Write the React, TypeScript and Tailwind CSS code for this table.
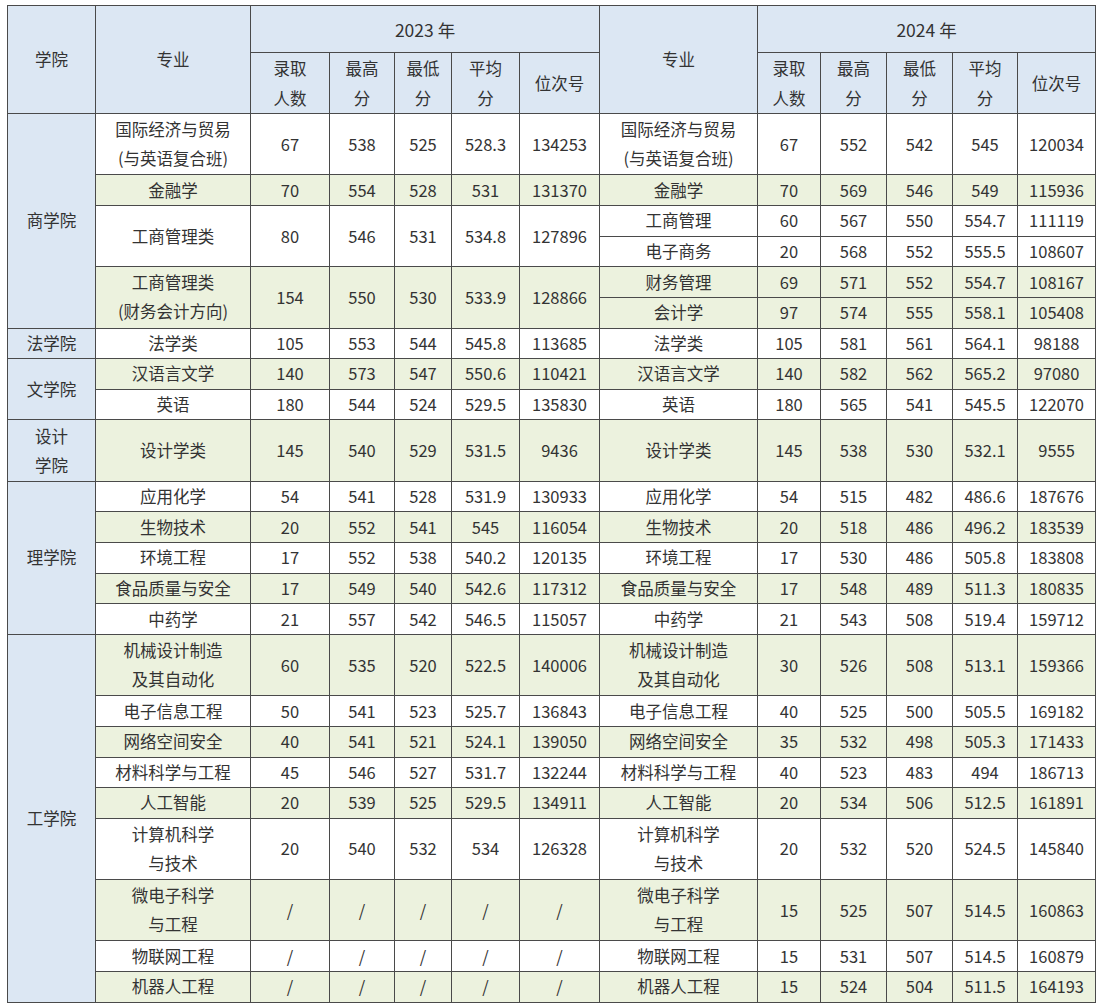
import React from "react";

type Vals = (string | number)[];

const G = "bg-[#ecf2de]";
const W = "bg-white";
const B = "bg-[#dce7f3]";

const td = "border border-[#4a4a4a] p-0 text-center align-middle";

function Cells({ v, bg, rs }: { v: Vals; bg: string; rs?: number }) {
  return (
    <>
      {v.map((x, i) => (
        <td key={i} rowSpan={rs} className={`${td} ${bg}`}>
          {x}
        </td>
      ))}
    </>
  );
}

function Major({ lines, bg, rs }: { lines: string[]; bg: string; rs?: number }) {
  return (
    <td rowSpan={rs} className={`${td} ${bg}`}>
      {lines.map((l, i) => (
        <div key={i}>{l}</div>
      ))}
    </td>
  );
}

const H1 = "h-[30.65px]";
const H2 = "h-[61.3px]";

type Row = {
  college?: { lines: string[]; rs: number };
  left?: { lines: string[]; v: Vals; bg: string; rs?: number };
  right: { lines: string[]; v: Vals; bg: string };
  h: string;
};

const S = ["/", "/", "/", "/", "/"];

const rows: Row[] = [
  {
    college: { lines: ["商学院"], rs: 6 },
    left: { lines: ["国际经济与贸易", "(与英语复合班)"], v: [67, 538, 525, 528.3, 134253], bg: W },
    right: { lines: ["国际经济与贸易", "(与英语复合班)"], v: [67, 552, 542, 545, 120034], bg: W },
    h: H2,
  },
  {
    left: { lines: ["金融学"], v: [70, 554, 528, 531, 131370], bg: G },
    right: { lines: ["金融学"], v: [70, 569, 546, 549, 115936], bg: G },
    h: H1,
  },
  {
    left: { lines: ["工商管理类"], v: [80, 546, 531, 534.8, 127896], bg: W, rs: 2 },
    right: { lines: ["工商管理"], v: [60, 567, 550, 554.7, 111119], bg: W },
    h: H1,
  },
  {
    right: { lines: ["电子商务"], v: [20, 568, 552, 555.5, 108607], bg: W },
    h: H1,
  },
  {
    left: { lines: ["工商管理类", "(财务会计方向)"], v: [154, 550, 530, 533.9, 128866], bg: G, rs: 2 },
    right: { lines: ["财务管理"], v: [69, 571, 552, 554.7, 108167], bg: G },
    h: H1,
  },
  {
    right: { lines: ["会计学"], v: [97, 574, 555, 558.1, 105408], bg: G },
    h: H1,
  },
  {
    college: { lines: ["法学院"], rs: 1 },
    left: { lines: ["法学类"], v: [105, 553, 544, 545.8, 113685], bg: W },
    right: { lines: ["法学类"], v: [105, 581, 561, 564.1, 98188], bg: W },
    h: H1,
  },
  {
    college: { lines: ["文学院"], rs: 2 },
    left: { lines: ["汉语言文学"], v: [140, 573, 547, 550.6, 110421], bg: G },
    right: { lines: ["汉语言文学"], v: [140, 582, 562, 565.2, 97080], bg: G },
    h: H1,
  },
  {
    left: { lines: ["英语"], v: [180, 544, 524, 529.5, 135830], bg: W },
    right: { lines: ["英语"], v: [180, 565, 541, 545.5, 122070], bg: W },
    h: H1,
  },
  {
    college: { lines: ["设计", "学院"], rs: 1 },
    left: { lines: ["设计学类"], v: [145, 540, 529, 531.5, 9436], bg: G },
    right: { lines: ["设计学类"], v: [145, 538, 530, 532.1, 9555], bg: G },
    h: H2,
  },
  {
    college: { lines: ["理学院"], rs: 5 },
    left: { lines: ["应用化学"], v: [54, 541, 528, 531.9, 130933], bg: W },
    right: { lines: ["应用化学"], v: [54, 515, 482, 486.6, 187676], bg: W },
    h: H1,
  },
  {
    left: { lines: ["生物技术"], v: [20, 552, 541, 545, 116054], bg: G },
    right: { lines: ["生物技术"], v: [20, 518, 486, 496.2, 183539], bg: G },
    h: H1,
  },
  {
    left: { lines: ["环境工程"], v: [17, 552, 538, 540.2, 120135], bg: W },
    right: { lines: ["环境工程"], v: [17, 530, 486, 505.8, 183808], bg: W },
    h: H1,
  },
  {
    left: { lines: ["食品质量与安全"], v: [17, 549, 540, 542.6, 117312], bg: G },
    right: { lines: ["食品质量与安全"], v: [17, 548, 489, 511.3, 180835], bg: G },
    h: H1,
  },
  {
    left: { lines: ["中药学"], v: [21, 557, 542, 546.5, 115057], bg: W },
    right: { lines: ["中药学"], v: [21, 543, 508, 519.4, 159712], bg: W },
    h: H1,
  },
  {
    college: { lines: ["工学院"], rs: 9 },
    left: { lines: ["机械设计制造", "及其自动化"], v: [60, 535, 520, 522.5, 140006], bg: G },
    right: { lines: ["机械设计制造", "及其自动化"], v: [30, 526, 508, 513.1, 159366], bg: G },
    h: H2,
  },
  {
    left: { lines: ["电子信息工程"], v: [50, 541, 523, 525.7, 136843], bg: W },
    right: { lines: ["电子信息工程"], v: [40, 525, 500, 505.5, 169182], bg: W },
    h: H1,
  },
  {
    left: { lines: ["网络空间安全"], v: [40, 541, 521, 524.1, 139050], bg: G },
    right: { lines: ["网络空间安全"], v: [35, 532, 498, 505.3, 171433], bg: G },
    h: H1,
  },
  {
    left: { lines: ["材料科学与工程"], v: [45, 546, 527, 531.7, 132244], bg: W },
    right: { lines: ["材料科学与工程"], v: [40, 523, 483, 494, 186713], bg: W },
    h: H1,
  },
  {
    left: { lines: ["人工智能"], v: [20, 539, 525, 529.5, 134911], bg: G },
    right: { lines: ["人工智能"], v: [20, 534, 506, 512.5, 161891], bg: G },
    h: H1,
  },
  {
    left: { lines: ["计算机科学", "与技术"], v: [20, 540, 532, 534, 126328], bg: W },
    right: { lines: ["计算机科学", "与技术"], v: [20, 532, 520, 524.5, 145840], bg: W },
    h: H2,
  },
  {
    left: { lines: ["微电子科学", "与工程"], v: S, bg: G },
    right: { lines: ["微电子科学", "与工程"], v: [15, 525, 507, 514.5, 160863], bg: G },
    h: H2,
  },
  {
    left: { lines: ["物联网工程"], v: S, bg: W },
    right: { lines: ["物联网工程"], v: [15, 531, 507, 514.5, 160879], bg: W },
    h: H1,
  },
  {
    left: { lines: ["机器人工程"], v: S, bg: G },
    right: { lines: ["机器人工程"], v: [15, 524, 504, 511.5, 164193], bg: G },
    h: H1,
  },
];

const subHeads = [["录取", "人数"], ["最高", "分"], ["最低", "分"], ["平均", "分"], ["位次号"]];

export default function App() {
  return (
    <div className="min-h-[1007px] w-[1100px] bg-white pl-[7px] pt-[5px] font-['Noto_Sans_CJK_SC','Noto_Sans',sans-serif] text-[16.5px] leading-[29px] text-[#333333]">
      <table className="w-[1088px] table-fixed border-collapse border border-[#5a5a5a]">
        <colgroup>
          <col className="w-[88px]" />
          <col className="w-[155px]" />
          <col className="w-[79px]" />
          <col className="w-[65px]" />
          <col className="w-[57px]" />
          <col className="w-[68px]" />
          <col className="w-[80px]" />
          <col className="w-[158px]" />
          <col className="w-[63px]" />
          <col className="w-[66px]" />
          <col className="w-[66px]" />
          <col className="w-[65px]" />
          <col className="w-[78px]" />
        </colgroup>
        <thead>
          <tr className="h-[47px]">
            <th rowSpan={2} className={`${td} ${B} font-normal`}>学院</th>
            <th rowSpan={2} className={`${td} ${B} font-normal`}>专业</th>
            <th colSpan={5} className={`${td} ${B} text-[17.5px] font-normal`}>2023 年</th>
            <th rowSpan={2} className={`${td} ${B} font-normal`}>专业</th>
            <th colSpan={5} className={`${td} ${B} text-[17.5px] font-normal`}>2024 年</th>
          </tr>
          <tr className="h-[61px]">
            {[...subHeads, ...subHeads].map((h, i) => (
              <th key={i} className={`${td} ${B} font-normal leading-[30px]`}>
                {h.map((l, j) => (
                  <div key={j}>{l}</div>
                ))}
              </th>
            ))}
          </tr>
        </thead>
        <tbody>
          {rows.map((r, i) => (
            <tr key={i} className={r.h}>
              {r.college && (
                <td rowSpan={r.college.rs} className={`${td} ${B}`}>
                  {r.college.lines.map((l, j) => (
                    <div key={j}>{l}</div>
                  ))}
                </td>
              )}
              {r.left && (
                <>
                  <Major lines={r.left.lines} bg={r.left.bg} rs={r.left.rs} />
                  <Cells v={r.left.v} bg={r.left.bg} rs={r.left.rs} />
                </>
              )}
              <Major lines={r.right.lines} bg={r.right.bg} />
              <Cells v={r.right.v} bg={r.right.bg} />
            </tr>
          ))}
        </tbody>
      </table>
    </div>
  );
}
